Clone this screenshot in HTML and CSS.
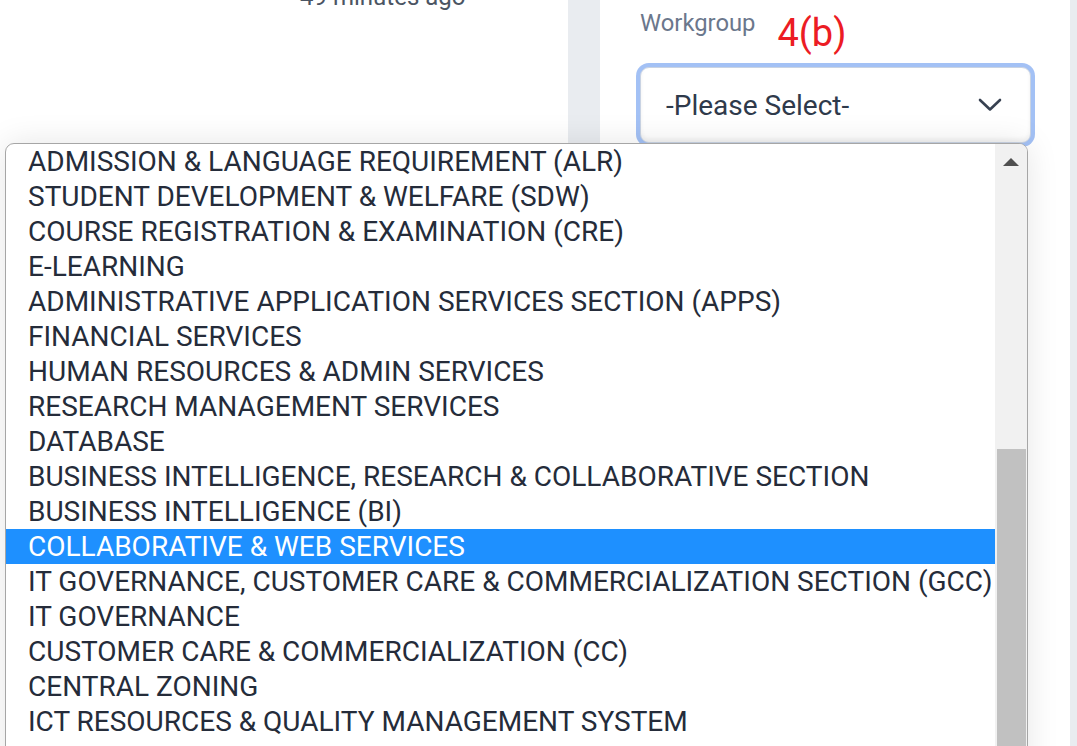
FILE: index.html
```html
<!DOCTYPE html>
<html>
<head>
<meta charset="utf-8">
<link rel="stylesheet" href="styles.css">
</head>
<body>
<div class="page">
  <section class="left-panel">
    <div class="time-row"><span class="time">49 minutes ago</span></div>
  </section>
  <div class="gutter"></div>
  <section class="right-panel">
    <div class="label-row">
      <span class="field-label">Workgroup</span>
      <span class="annot">4(b)</span>
    </div>
    <div class="select">
      <span class="select-text">-Please Select-</span>
      <svg class="chev" width="24" height="14" viewBox="0 0 24 14"><path d="M2 2 L12 11.5 L22 2" fill="none" stroke="#374151" stroke-width="2.6" stroke-linecap="round" stroke-linejoin="round"/></svg>
    </div>
  </section>
  <div class="gutter-right"></div>

  <div class="popup">
    <ul class="options">
      <li>ADMISSION &amp; LANGUAGE REQUIREMENT (ALR)</li>
      <li>STUDENT DEVELOPMENT &amp; WELFARE (SDW)</li>
      <li>COURSE REGISTRATION &amp; EXAMINATION (CRE)</li>
      <li>E-LEARNING</li>
      <li>ADMINISTRATIVE APPLICATION SERVICES SECTION (APPS)</li>
      <li>FINANCIAL SERVICES</li>
      <li>HUMAN RESOURCES &amp; ADMIN SERVICES</li>
      <li>RESEARCH MANAGEMENT SERVICES</li>
      <li>DATABASE</li>
      <li>BUSINESS INTELLIGENCE, RESEARCH &amp; COLLABORATIVE SECTION</li>
      <li>BUSINESS INTELLIGENCE (BI)</li>
      <li class="selected">COLLABORATIVE &amp; WEB SERVICES</li>
      <li>IT GOVERNANCE, CUSTOMER CARE &amp; COMMERCIALIZATION SECTION (GCC)</li>
      <li>IT GOVERNANCE</li>
      <li>CUSTOMER CARE &amp; COMMERCIALIZATION (CC)</li>
      <li>CENTRAL ZONING</li>
      <li>ICT RESOURCES &amp; QUALITY MANAGEMENT SYSTEM</li>
    </ul>
    <div class="scrollbar">
      <div class="arrow-up"></div>
      <div class="thumb"></div>
    </div>
  </div>
</div>
</body>
</html>
```
FILE: styles.css
```css
html, body {
  margin: 0;
  padding: 0;
}
body {
  background: #e9ecf0;
  font-family: Roboto, "Liberation Sans", Arial, sans-serif;
  width: 1077px;
  height: 746px;
  overflow: hidden;
}
.page {
  position: relative;
  display: flex;
  height: 746px;
}
.left-panel {
  width: 568px;
  background: #ffffff;
}
.time-row {
  padding-left: 300px;
  margin-top: -18px;
}
.time {
  font-size: 24px;
  line-height: 30px;
  color: #4b5563;
}
.gutter {
  width: 32px;
  background: #e9ecf0;
}
.right-panel {
  width: 470px;
  background: #ffffff;
  padding: 0 0 0 40px;
  box-sizing: border-box;
}
.gutter-right {
  width: 7px;
  background: #e9ecf0;
}
.label-row {
  display: flex;
  align-items: flex-start;
  height: 67px;
}
.field-label {
  margin-top: 9px;
  font-size: 23.8px;
  line-height: 28px;
  color: #6b778c;
}
.annot {
  margin-left: 22px;
  margin-top: 10px;
  font-size: 38px;
  line-height: 46px;
  color: #ec1c24;
}
.select {
  width: 391px;
  height: 76px;
  box-sizing: border-box;
  border: 1px solid #c9d3e3;
  border-radius: 9px;
  box-shadow: 0 0 0 4px #a3c1f5, inset 0 -3px 4px rgba(0,0,0,0.06);
  display: flex;
  align-items: center;
  justify-content: space-between;
  padding: 0 28px 0 25px;
  background: #ffffff;
}
.select-text {
  font-size: 28px;
  color: #2f3a4b;
}
.chev {
  display: block;
}
.popup {
  position: absolute;
  left: 5px;
  top: 143px;
  width: 1023px;
  height: 640px;
  box-sizing: border-box;
  border: 1px solid #a6a6a6;
  border-radius: 9px 9px 0 0;
  background: #ffffff;
  display: flex;
  overflow: hidden;
  box-shadow: 0 0 32px rgba(0,0,0,0.10);
}
.options {
  list-style: none;
  margin: 0;
  padding: 0;
  flex: 1;
}
.options li {
  height: 35px;
  line-height: 35px;
  padding-left: 22px;
  font-size: 28px;
  color: #252c3a;
  white-space: nowrap;
}
.options li.selected {
  background: #1e90ff;
  color: #ffffff;
}
.scrollbar {
  width: 32px;
  background: #f1f1f1;
  position: relative;
}
.arrow-up {
  width: 0;
  height: 0;
  margin: 14px auto 0;
  border-left: 8px solid transparent;
  border-right: 8px solid transparent;
  border-bottom: 8px solid #505050;
}
.thumb {
  position: absolute;
  left: 2px;
  right: 1px;
  top: 305px;
  bottom: 0;
  background: #c1c1c1;
}
```
